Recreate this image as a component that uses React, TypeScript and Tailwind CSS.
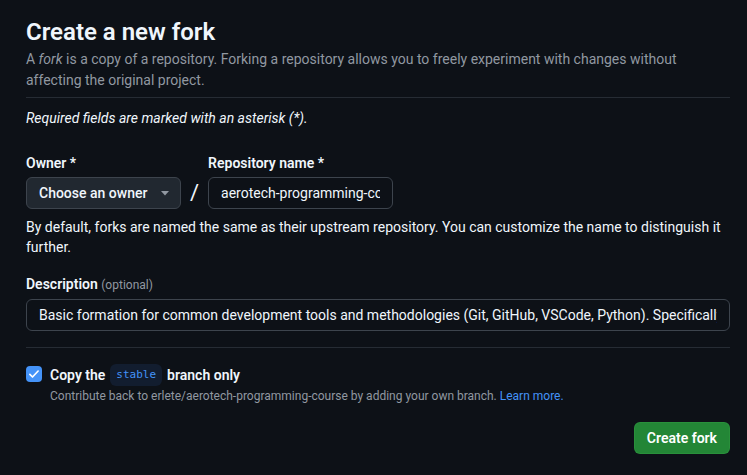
import { useState } from "react";

const font = "font-['Segoe_UI','Roboto','Liberation_Sans',sans-serif]";

export default function App() {
  const [owner] = useState("Choose an owner");
  const [name, setName] = useState("aerotech-programming-course");
  const [desc, setDesc] = useState(
    "Basic formation for common development tools and methodologies (Git, GitHub, VSCode, Python). Specifically targeted at aerospace engineering students."
  );
  const [stableOnly, setStableOnly] = useState(true);

  return (
    <div className={`min-h-screen w-full bg-[#0d1117] text-[#f0f6fc] ${font}`}>
      <div className="pl-[26px] pr-[17px] pt-[17px]">
        <h1 className="text-[24px] font-semibold leading-[30px]">Create a new fork</h1>
        <p className="mt-[2px] text-[14px] leading-[21px] text-[#9198a1]">
          A <em>fork</em> is a copy of a repository. Forking a repository allows you to freely experiment with changes without affecting the original project.
        </p>
        <div className="mt-[6px] h-px w-full bg-[#262c34]"></div>

        <p className="mt-[10px] text-[14px] italic leading-[21px]">Required fields are marked with an asterisk (*).</p>

        <div className="mt-[24px] flex items-end gap-[9px]">
          <div className="flex flex-col gap-[3px]">
            <label className="text-[14px] font-semibold leading-[21px]">Owner *</label>
            <button className="flex h-[32px] w-[155px] items-center justify-between rounded-[6px] border border-[#3d444d] bg-[#212830] pl-[12px] pr-[11px] text-[14px] font-medium">
              <span>{owner}</span>
              <svg width="8" height="5" viewBox="0 0 8 5" className="text-[#9198a1]">
                <path d="M0 0h8L4 4.5z" fill="currentColor" />
              </svg>
            </button>
          </div>
          <span className="flex h-[32px] items-center text-[22px] leading-none">/</span>
          <div className="flex flex-col gap-[3px]">
            <label className="text-[14px] font-semibold leading-[21px]">Repository name *</label>
            <input
              value={name}
              onChange={(e) => setName(e.target.value)}
              className="h-[32px] w-[185px] rounded-[6px] border border-[#3d444d] bg-[#0d1117] px-[12px] text-[14px] text-[#f0f6fc] outline-none"
            />
          </div>
        </div>

        <p className="mt-[8px] text-[14px] leading-[20px]">
          By default, forks are named the same as their upstream repository. You can customize the name to distinguish it further.
        </p>

        <div className="mt-[17px] flex flex-col gap-[3px]">
          <label className="text-[14px] font-semibold leading-[21px]">
            Description <span className="text-[12px] font-normal text-[#9198a1]">(optional)</span>
          </label>
          <input
            value={desc}
            onChange={(e) => setDesc(e.target.value)}
            className="h-[32px] w-full rounded-[6px] border border-[#3d444d] bg-[#0d1117] px-[12px] text-[14px] text-[#f0f6fc] outline-none"
          />
        </div>

        <div className="mt-[16px] h-px w-full bg-[#262c34]"></div>

        <div className="mt-[18px] flex gap-[8px]">
          <button
            onClick={() => setStableOnly(!stableOnly)}
            className={`flex h-[16px] w-[16px] shrink-0 items-center justify-center rounded-[4px] ${
              stableOnly ? "bg-[#4493f8]" : "border border-[#3d444d]"
            }`}
          >
            {stableOnly && (
              <svg width="12" height="12" viewBox="0 0 16 16">
                <path d="M2.5 8.5l3.5 3.5 7.5-8" stroke="#ffffff" strokeWidth="2.2" fill="none" strokeLinecap="round" strokeLinejoin="round" />
              </svg>
            )}
          </button>
          <div className="-mt-[2px] flex flex-col">
            <div className="flex items-center gap-[5px] text-[14px] font-semibold leading-[22px]">
              <span>Copy the</span>
              <code className="flex h-[22px] items-center rounded-[6px] bg-[#121d2f] px-[6px] font-['DejaVu_Sans_Mono','Liberation_Mono',monospace] text-[11px] font-normal text-[#4493f8]">
                stable
              </code>
              <span>branch only</span>
            </div>
            <p className="mt-[1px] text-[12px] leading-[18px] text-[#9198a1]">
              Contribute back to erlete/aerotech-programming-course by adding your own branch.{" "}
              <a className="text-[#4493f8]">Learn more.</a>
            </p>
          </div>
        </div>

        <div className="mt-[17px] flex justify-end">
          <button className="h-[32px] rounded-[6px] border border-[#3fb95033] bg-[#238636] px-[12px] text-[14px] font-semibold text-white">
            Create fork
          </button>
        </div>
      </div>
    </div>
  );
}
